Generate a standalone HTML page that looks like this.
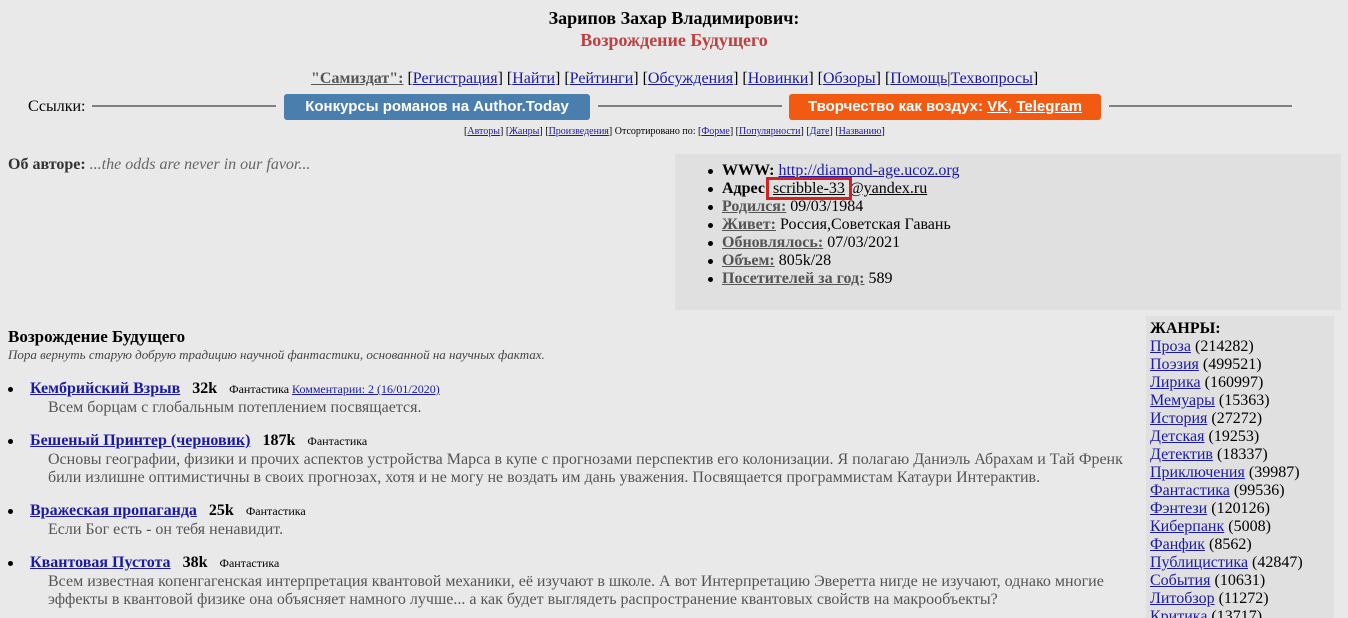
<!DOCTYPE html>
<html><head><meta charset="utf-8"><style>
html,body{margin:0;height:618px;overflow:hidden}
body{background:#e9e9e9;font-family:"Liberation Serif",serif;font-size:16px;color:#000;width:1348px;position:relative}
.a{position:absolute;white-space:nowrap}
a{color:#1a1aa6;text-decoration:underline}
.hr{position:absolute;height:2px;background:#808080;top:105px}
.btn{position:absolute;top:94px;height:26px;color:#fff;font-family:"Liberation Sans",sans-serif;font-weight:bold;font-size:15px;line-height:26px;text-align:center;border-radius:3px}
.btn a{color:#fff}
.small{font-size:10px}
.small a{color:#1a1aa6}
.it{font-weight:bold;font-size:16px}
.it a{color:#1a1aa6}
.bul{position:absolute;width:5px;height:5px;border-radius:50%;background:#000}
.desc{color:#555;position:absolute;left:48px;line-height:18px;white-space:nowrap}
.g{line-height:18px}
</style></head><body>
<div class="a" style="left:0;width:1348px;text-align:center;top:8px;font-weight:bold;font-size:18px">Зарипов Захар Владимирович:</div>
<div class="a" style="left:0;width:1348px;text-align:center;top:30px;font-weight:bold;font-size:18px;color:#c04040">Возрождение Будущего</div>
<div class="a" style="left:311px;top:70px;font-size:16px"><b><u style="color:#555">"Самиздат":</u></b> [<a>Регистрация</a>] [<a>Найти</a>] [<a>Рейтинги</a>] [<a>Обсуждения</a>] [<a>Новинки</a>] [<a>Обзоры</a>] [<a>Помощь</a>|<a>Техвопросы</a>]</div>
<div class="a" style="left:28px;top:98px">Ссылки:</div>
<div class="hr" style="left:92px;width:184px"></div>
<div class="btn" style="left:284px;width:306px;background:#4a7fad">Конкурсы романов на Author.Today</div>
<div class="hr" style="left:598px;width:184px"></div>
<div class="btn" style="left:789px;width:312px;background:#f25a12">Творчество как воздух: <a>VK</a>, <a>Telegram</a></div>
<div class="hr" style="left:1109px;width:183px"></div>
<div class="a small" style="left:464px;top:126px">[<a>Авторы</a>] [<a>Жанры</a>] [<a>Произведения</a>] Отсортировано по: [<a>Форме</a>] [<a>Популярности</a>] [<a>Дате</a>] [<a>Названию</a>]</div>
<div class="a" style="left:8px;top:156px;color:#333"><b>Об авторе:</b> <i style="color:#666">...the odds are never in our favor...</i></div>
<div style="position:absolute;left:675px;top:154px;width:666px;height:156px;background:#e0e0e0"></div>
<div style="position:absolute;left:708px;top:162px;line-height:18px;white-space:nowrap">
<div><span class="bul" style="left:0;top:7px;position:absolute"></span><span style="margin-left:14px"><b>WWW:</b> <a>http://diamond-age.ucoz.org</a></span></div>
<div><span class="bul" style="left:0;top:25px"></span><span style="margin-left:14px"><b>Адрес</b> <span style="outline:3px solid #d42020;outline-offset:0">&nbsp;<u>scribble-33</u>&nbsp;</span><u>@yandex.ru</u></span></div>
<div><span class="bul" style="left:0;top:43px"></span><span style="margin-left:14px"><b><u style="color:#555">Родился:</u></b> 09/03/1984</span></div>
<div><span class="bul" style="left:0;top:61px"></span><span style="margin-left:14px"><b><u style="color:#555">Живет:</u></b> Россия,Советская Гавань</span></div>
<div><span class="bul" style="left:0;top:79px"></span><span style="margin-left:14px"><b><u style="color:#555">Обновлялось:</u></b> 07/03/2021</span></div>
<div><span class="bul" style="left:0;top:97px"></span><span style="margin-left:14px"><b><u style="color:#555">Объем:</u></b> 805k/28</span></div>
<div><span class="bul" style="left:0;top:115px"></span><span style="margin-left:14px"><b><u style="color:#555">Посетителей за год:</u></b> 589</span></div>
</div>
<div class="a" style="left:8px;top:327px;font-weight:bold;font-size:17px">Возрождение Будущего</div>
<div class="a" style="left:8px;top:347px;font-size:13px;font-style:italic;color:#444">Пора вернуть старую добрую традицию научной фантастики, основанной на научных фактах.</div>

<div class="bul" style="left:8px;top:387px"></div>
<div class="a" style="left:30px;top:380px"><span class="it"><a>Кембрийский Взрыв</a> &nbsp; 32k</span> &nbsp; <span style="font-size:12px">Фантастика <a>Комментарии: 2 (16/01/2020)</a></span></div>
<div class="desc" style="top:399px">Всем борцам с глобальным потеплением посвящается.</div>

<div class="bul" style="left:8px;top:439px"></div>
<div class="a" style="left:30px;top:432px"><span class="it"><a>Бешеный Принтер (черновик)</a> &nbsp; 187k</span> &nbsp; <span style="font-size:12px">Фантастика</span></div>
<div class="desc" style="top:451px">Основы географии, физики и прочих аспектов устройства Марса в купе с прогнозами перспектив его колонизации. Я полагаю Даниэль Абрахам и Тай Френк<br>били излишне оптимистичны в своих прогнозах, хотя и не могу не воздать им дань уважения. Посвящается программистам Катаури Интерактив.</div>

<div class="bul" style="left:8px;top:509px"></div>
<div class="a" style="left:30px;top:502px"><span class="it"><a>Вражеская пропаганда</a> &nbsp; 25k</span> &nbsp; <span style="font-size:12px">Фантастика</span></div>
<div class="desc" style="top:521px">Если Бог есть - он тебя ненавидит.</div>

<div class="bul" style="left:8px;top:561px"></div>
<div class="a" style="left:30px;top:554px"><span class="it"><a>Квантовая Пустота</a> &nbsp; 38k</span> &nbsp; <span style="font-size:12px">Фантастика</span></div>
<div class="desc" style="top:573px">Всем известная копенгагенская интерпретация квантовой механики, её изучают в школе. А вот Интерпретацию Эверетта нигде не изучают, однако многие<br>эффекты в квантовой физике она объясняет намного лучше... а как будет выглядеть распространение квантовых свойств на макрообъекты?</div>

<div style="position:absolute;left:1146px;top:316px;width:188px;height:302px;background:#e0e0e0"></div>
<div class="a g" style="left:1150px;top:320px">
<b>ЖАНРЫ:</b><br>
<a>Проза</a> (214282)<br><a>Поэзия</a> (499521)<br><a>Лирика</a> (160997)<br><a>Мемуары</a> (15363)<br><a>История</a> (27272)<br><a>Детская</a> (19253)<br><a>Детектив</a> (18337)<br><a>Приключения</a> (39987)<br><a>Фантастика</a> (99536)<br><a>Фэнтези</a> (120126)<br><a>Киберпанк</a> (5008)<br><a>Фанфик</a> (8562)<br><a>Публицистика</a> (42847)<br><a>События</a> (10631)<br><a>Литобзор</a> (11272)<br><a>Критика</a> (13717)
</div>
</body></html>
